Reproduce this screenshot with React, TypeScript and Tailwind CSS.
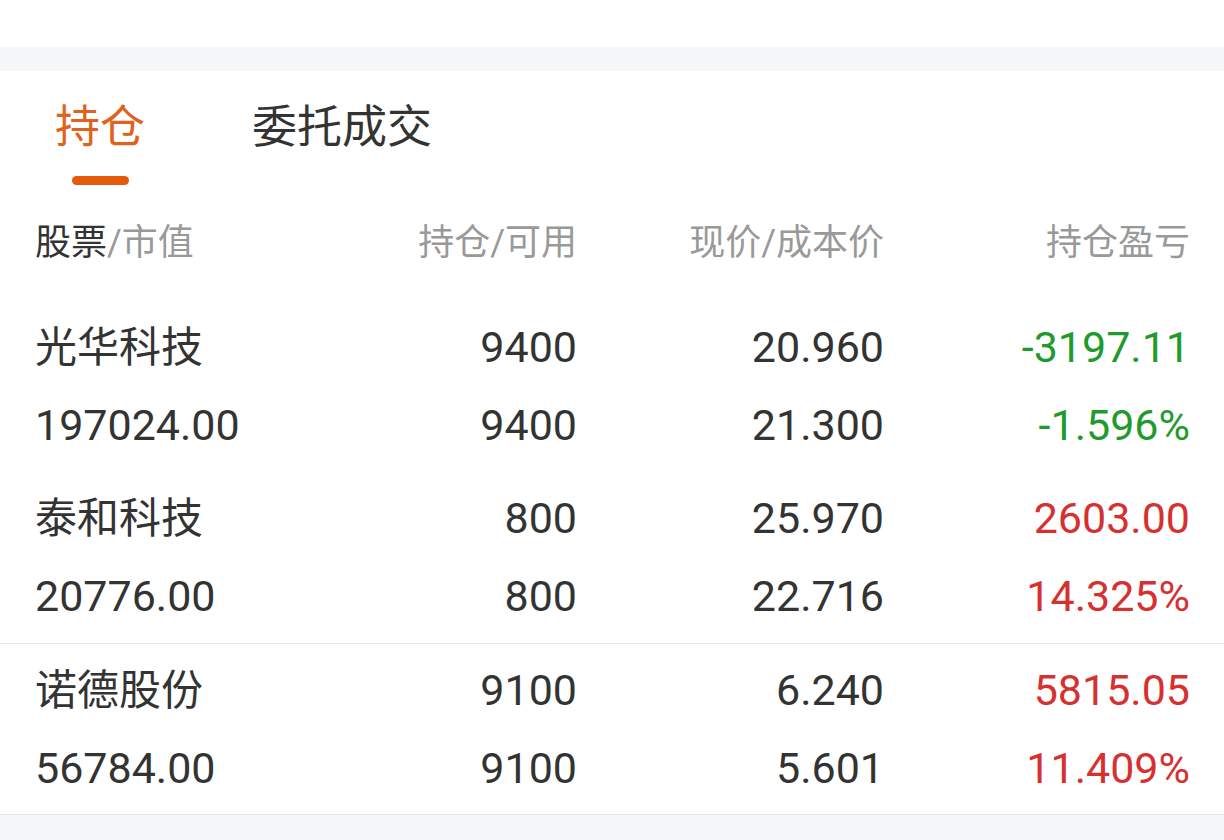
const rows = [
  {
    name: '光华科技',
    value: '197024.00',
    hold: '9400',
    avail: '9400',
    price: '20.960',
    cost: '21.300',
    pl: '-3197.11',
    pct: '-1.596%',
    up: false,
    divider: false,
  },
  {
    name: '泰和科技',
    value: '20776.00',
    hold: '800',
    avail: '800',
    price: '25.970',
    cost: '22.716',
    pl: '2603.00',
    pct: '14.325%',
    up: true,
    divider: false,
  },
  {
    name: '诺德股份',
    value: '56784.00',
    hold: '9100',
    avail: '9100',
    price: '6.240',
    cost: '5.601',
    pl: '5815.05',
    pct: '11.409%',
    up: true,
    divider: true,
  },
];

const font = { fontFamily: 'Roboto, "Noto Sans CJK SC", sans-serif' };

export default function App() {
  return (
    <div className="w-[1224px] h-[840px] bg-[#f6f7f9] overflow-hidden" style={font}>
      <div className="h-[47px] bg-white"></div>
      <div className="h-[24px]"></div>
      <div className="bg-white">
        <div className="flex pt-[35px] pl-[55px]">
          <div className="flex flex-col items-center">
            <span className="text-[45px] leading-[44px] text-[#de6320]">持仓</span>
            <span className="mt-[26px] w-[57px] h-[9px] rounded-full bg-[#e55a0a]"></span>
          </div>
          <span className="ml-[107px] text-[45px] leading-[44px] text-[#333333]">委托成交</span>
        </div>

        <div className="mt-[40px] grid grid-cols-[341px_201px_307px_306px] pl-[35px] text-[36px] leading-[36px] text-[#999999]">
          <div>
            <span className="text-[#333333]">股票</span>/市值
          </div>
          <div className="text-right">持仓/可用</div>
          <div className="text-right">现价/成本价</div>
          <div className="text-right">持仓盈亏</div>
        </div>

        <div className="h-[40px]"></div>

        {rows.map((r) => (
          <div
            key={r.name}
            className={`h-[171px] flex flex-col justify-center ${r.divider ? 'border-t border-[#e8e8e8]' : ''}`}
          >
            <div className="grid grid-cols-[341px_201px_307px_306px] pl-[35px] h-[78px] items-center text-[43px] text-[#333333]">
              <div className="text-[42px]">{r.name}</div>
              <div className="text-right">{r.hold}</div>
              <div className="text-right">{r.price}</div>
              <div className={`text-right ${r.up ? 'text-[#d63031]' : 'text-[#1e9b2c]'}`}>{r.pl}</div>
            </div>
            <div className="grid grid-cols-[341px_201px_307px_306px] pl-[35px] h-[78px] items-center text-[43px] text-[#333333]">
              <div>{r.value}</div>
              <div className="text-right">{r.avail}</div>
              <div className="text-right">{r.cost}</div>
              <div className={`text-right ${r.up ? 'text-[#d63031]' : 'text-[#1e9b2c]'}`}>{r.pct}</div>
            </div>
          </div>
        ))}
        <div className="border-t border-[#e8e8e8]"></div>
      </div>
    </div>
  );
}
